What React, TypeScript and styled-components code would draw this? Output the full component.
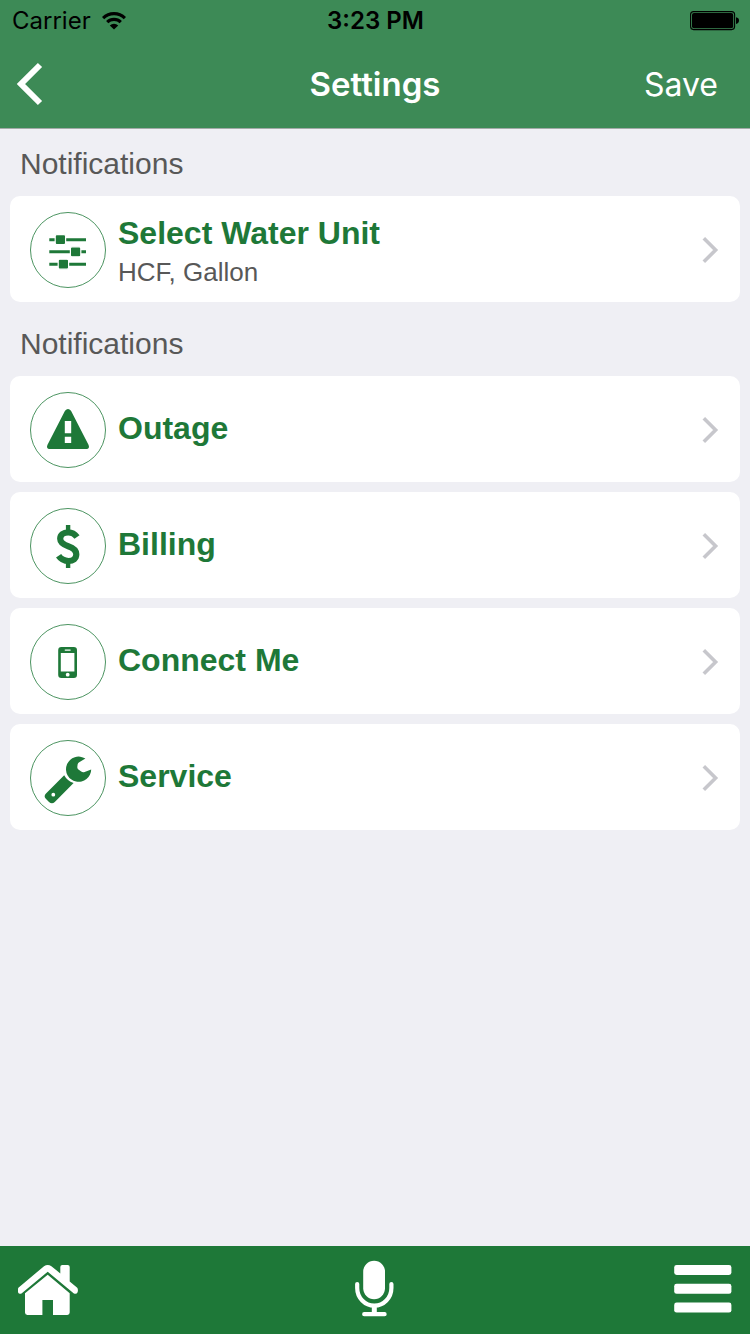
import React from "react";
import styled, { createGlobalStyle } from "styled-components";

const GREEN = "#1e7838";

const GlobalStyle = createGlobalStyle`
  *, *::before, *::after { box-sizing: border-box; }
  body {
    margin: 0;
    background: #efeff4;
    font-family: "Liberation Sans", Arial, sans-serif;
  }
  button { border: 0; padding: 0; background: none; font: inherit; color: inherit; cursor: pointer; }
`;

const Screen = styled.div`
  min-height: 100vh;
  display: flex;
  flex-direction: column;
`;

const Header = styled.header`
  background: #3d8a56;
  border-bottom: 1px solid #a3aaa8;
  font-family: Inter, sans-serif;
`;

const ThreeColumns = styled.div`
  display: grid;
  grid-template-columns: 1fr auto 1fr;
  align-items: center;

  & > :last-child { justify-self: end; }
  & > :first-child { justify-self: start; }
`;

const StatusBar = styled(ThreeColumns)`
  height: 40px;
  padding: 2px 11px 0 12px;
  font-size: 24px;
  line-height: 38px;
  color: #000;
`;

const Carrier = styled.div`
  display: flex;
  align-items: center;
  gap: 10px;
`;

const Clock = styled.time`
  font-weight: 600;
`;

const NavBar = styled(ThreeColumns)`
  height: 88px;
  color: #fff;
`;

const Title = styled.h1`
  margin: 0;
  font-size: 33px;
  font-weight: 600;
  line-height: 88px;
`;

const NavButton = styled.button`
  display: flex;
  align-items: center;
  height: 88px;
  font-size: 32px;

  &:first-child { padding: 0 32px 0 16px; }
  &:last-child { padding: 0 32px; }
`;

const Main = styled.main`
  flex: 1;
  padding: 0 10px 20px;
`;

const Section = styled.section`
  padding-top: 15px;

  & + & { padding-top: 22px; }
`;

const SectionTitle = styled.h2`
  margin: 0 0 12px;
  padding: 0 10px;
  font-size: 30px;
  font-weight: 400;
  line-height: 40px;
  color: #585858;
`;

const List = styled.ul`
  margin: 0;
  padding: 0;
  list-style: none;
  display: grid;
  gap: 10px;
`;

const Row = styled.button`
  width: 100%;
  height: 106px;
  padding: 2px 20px 0;
  display: flex;
  align-items: center;
  gap: 12px;
  border-radius: 10px;
  background: #fff;
  color: ${GREEN};
  text-align: left;
`;

const RowText = styled.span`
  flex: 1;
  display: grid;
`;

const RowTitle = styled.span`
  padding-bottom: 4px;
  font-size: 32px;
  font-weight: 700;
  line-height: 40px;
`;

const RowDetail = styled.span`
  font-size: 26px;
  line-height: 31px;
  color: #585858;
`;

const Footer = styled.footer`
  position: sticky;
  bottom: 0;
  background: ${GREEN};
  color: #fff;
`;

const FooterBar = styled(ThreeColumns)`
  height: 88px;
  padding: 0 18px;
`;

const FooterButton = styled.button`
  display: flex;
  align-items: center;
  height: 88px;
`;

const Badge = ({ children }: { children: React.ReactNode }) => (
  <svg width="76" height="76" viewBox="0 0 76 76" fill="currentColor" aria-hidden="true">
    <circle cx="38" cy="38" r="37.5" fill="none" stroke="currentColor" strokeWidth="0.8" />
    {children}
  </svg>
);

const SlidersIcon = () => (
  <Badge>
    <path d="M19.3 27.7H56M19.3 39.8H56M19.3 52.2H56" stroke="currentColor" strokeWidth="3" />
    <g stroke="#fff" strokeWidth="1.2">
      <rect x="25.2" y="22.6" width="10.4" height="10" rx="1.6" />
      <rect x="40.4" y="34.8" width="10.4" height="10" rx="1.6" />
      <rect x="28.2" y="47.2" width="10.4" height="10" rx="1.6" />
    </g>
  </Badge>
);

const WarningIcon = () => (
  <Badge>
    <path
      fillRule="evenodd"
      d="M35 18.8Q38 15.4 41 18.8L58.6 53Q60 56.7 56.6 57H19.4Q16 56.7 17.4 53ZM34.8 29V41.2H41.2V29ZM34.8 44.8V51H41.2V44.8Z"
    />
  </Badge>
);

const DollarIcon = () => (
  <Badge>
    <path d="M35.9 17H40.3V24H35.9ZM35.9 53H40.3V60H35.9Z" />
    <path
      d="M47 29C44.6 25.6 41.4 24.3 38.2 24.3C33.2 24.3 30.2 27.2 30.2 30.8C30.2 35 33.4 36.6 38.2 38.2C43.6 40 46.3 42 46.3 46.3C46.3 50.6 43 53 38.6 53C34.2 53 31 51.4 28.6 47.8"
      fill="none"
      stroke="currentColor"
      strokeWidth="6.2"
    />
  </Badge>
);

const PhoneIcon = () => (
  <Badge>
    <path
      fillRule="evenodd"
      d="M31.4 23H43.8Q47 23 47 26.2V50.8Q47 54 43.8 54H31.4Q28.2 54 28.2 50.8V26.2Q28.2 23 31.4 23ZM30.8 29V47.6H44.4V29Z"
    />
    <rect x="34.6" y="25.4" width="6.2" height="1.4" rx="0.7" fill="#fff" />
    <circle cx="37.7" cy="50.7" r="1.9" fill="#fff" />
  </Badge>
);

const WrenchIcon = () => (
  <Badge>
    <path d="M55.4 18.6A12.6 12.6 0 1 0 61.2 29.4L54 32.3Q52.4 32.6 51.2 31.6L48.4 29.4Q47.2 28.4 47.3 27L47.6 24.6Q47.8 23 49.2 22.2Z" />
    <path
      fillRule="evenodd"
      d="M34.2 35.2Q37 40.6 43.6 43L24.8 62Q22 64.6 19 62L15.8 58.8Q13.4 56 16 53.4ZM23.3 52.8A1.9 1.9 0 1 0 23.3 56.6A1.9 1.9 0 1 0 23.3 52.8Z"
    />
  </Badge>
);

const Chevron = () => (
  <svg width="18" height="28" viewBox="0 0 18 28" fill="none" stroke="#c7c7cc" strokeWidth="3.6" aria-hidden="true">
    <path d="M1.8 2.2L13.6 14L1.8 25.8" />
  </svg>
);

const WifiIcon = () => (
  <svg width="26" height="20" viewBox="0 0 26 20" fill="none" stroke="#000" strokeWidth="3.1" aria-hidden="true">
    <path d="M2.1 7.1A15.4 15.4 0 0 1 23.9 7.1M6.2 11.2A9.6 9.6 0 0 1 19.8 11.2" />
    <path d="M13 18.6L8.8 14.4A6 6 0 0 1 17.2 14.4Z" fill="#000" stroke="none" />
  </svg>
);

const BatteryIcon = () => (
  <svg width="49" height="20" viewBox="0 0 49 20" aria-hidden="true">
    <rect x="0.6" y="0.6" width="44" height="18" rx="3" fill="none" stroke="#000" strokeWidth="1.1" />
    <rect x="2" y="2" width="41.2" height="15.2" rx="2" />
    <path d="M46 6.2Q49 6.7 49 9.6T46 13Z" />
  </svg>
);

const BackIcon = () => (
  <svg width="28" height="44" viewBox="0 0 28 44" fill="none" stroke="currentColor" strokeWidth="6" aria-hidden="true">
    <path d="M24 3L5 22L24 41" />
  </svg>
);

const HomeIcon = () => (
  <svg width="60" height="52" viewBox="0 0 60 52" fill="currentColor" aria-hidden="true">
    <path d="M26 2.2Q29.7 -0.3 33.4 2.2L42.3 9.4V3Q42.3 1 44.3 1H49.7Q51.7 1 51.7 3V17.4L59.2 23.8Q60.4 25.4 59.6 28.2Q58.4 30.6 55.9 29.4L29.7 7.7L3.5 29.4Q1 30.6 0 28.2Q-0.6 25.4 0.4 23.8Z" />
    <path d="M29.7 10.8L51.7 29.2V48.6Q51.7 51 49.3 51H35V36H24.4V51H9.4Q7 51 7 48.6V29.2Z" />
  </svg>
);

const MicIcon = () => (
  <svg width="42" height="60" viewBox="0 0 42 60" fill="none" stroke="currentColor" strokeWidth="4.2" strokeLinecap="round" aria-hidden="true">
    <rect x="9.2" y="0.8" width="21.8" height="38.4" rx="10.9" fill="currentColor" stroke="none" />
    <path d="M3.2 24V28A17 17.6 0 0 0 37.4 28V24M10.2 54.2H30.6" />
    <path d="M20.3 45V54" strokeWidth="5" strokeLinecap="butt" />
  </svg>
);

const MenuIcon = () => (
  <svg width="58" height="50" viewBox="0 0 58 50" fill="currentColor" aria-hidden="true">
    <rect x="0.2" y="0" width="57.2" height="10" rx="2.4" />
    <rect x="0.2" y="18.8" width="57.2" height="10" rx="2.4" />
    <rect x="0.2" y="37.6" width="57.2" height="10" rx="2.4" />
  </svg>
);

type Item = { title: string; detail?: string; Icon: React.ComponentType };

const sections: { title: string; items: Item[] }[] = [
  {
    title: "Notifications",
    items: [{ title: "Select Water Unit", detail: "HCF, Gallon", Icon: SlidersIcon }],
  },
  {
    title: "Notifications",
    items: [
      { title: "Outage", Icon: WarningIcon },
      { title: "Billing", Icon: DollarIcon },
      { title: "Connect Me", Icon: PhoneIcon },
      { title: "Service", Icon: WrenchIcon },
    ],
  },
];

export default function App() {
  return (
    <Screen>
      <GlobalStyle />
      <Header>
        <StatusBar>
          <Carrier>
            <span>Carrier</span>
            <WifiIcon />
          </Carrier>
          <Clock>3:23 PM</Clock>
          <BatteryIcon />
        </StatusBar>
        <NavBar>
          <NavButton type="button" aria-label="Back">
            <BackIcon />
          </NavButton>
          <Title>Settings</Title>
          <NavButton type="button">Save</NavButton>
        </NavBar>
      </Header>
      <Main>
        {sections.map((section, index) => (
          <Section key={index}>
            <SectionTitle>{section.title}</SectionTitle>
            <List>
              {section.items.map(({ title, detail, Icon }) => (
                <li key={title}>
                  <Row type="button">
                    <Icon />
                    <RowText>
                      <RowTitle>{title}</RowTitle>
                      {detail && <RowDetail>{detail}</RowDetail>}
                    </RowText>
                    <Chevron />
                  </Row>
                </li>
              ))}
            </List>
          </Section>
        ))}
      </Main>
      <Footer>
        <FooterBar as="nav">
          <FooterButton type="button" aria-label="Home">
            <HomeIcon />
          </FooterButton>
          <FooterButton type="button" aria-label="Voice">
            <MicIcon />
          </FooterButton>
          <FooterButton type="button" aria-label="Menu">
            <MenuIcon />
          </FooterButton>
        </FooterBar>
      </Footer>
    </Screen>
  );
}
